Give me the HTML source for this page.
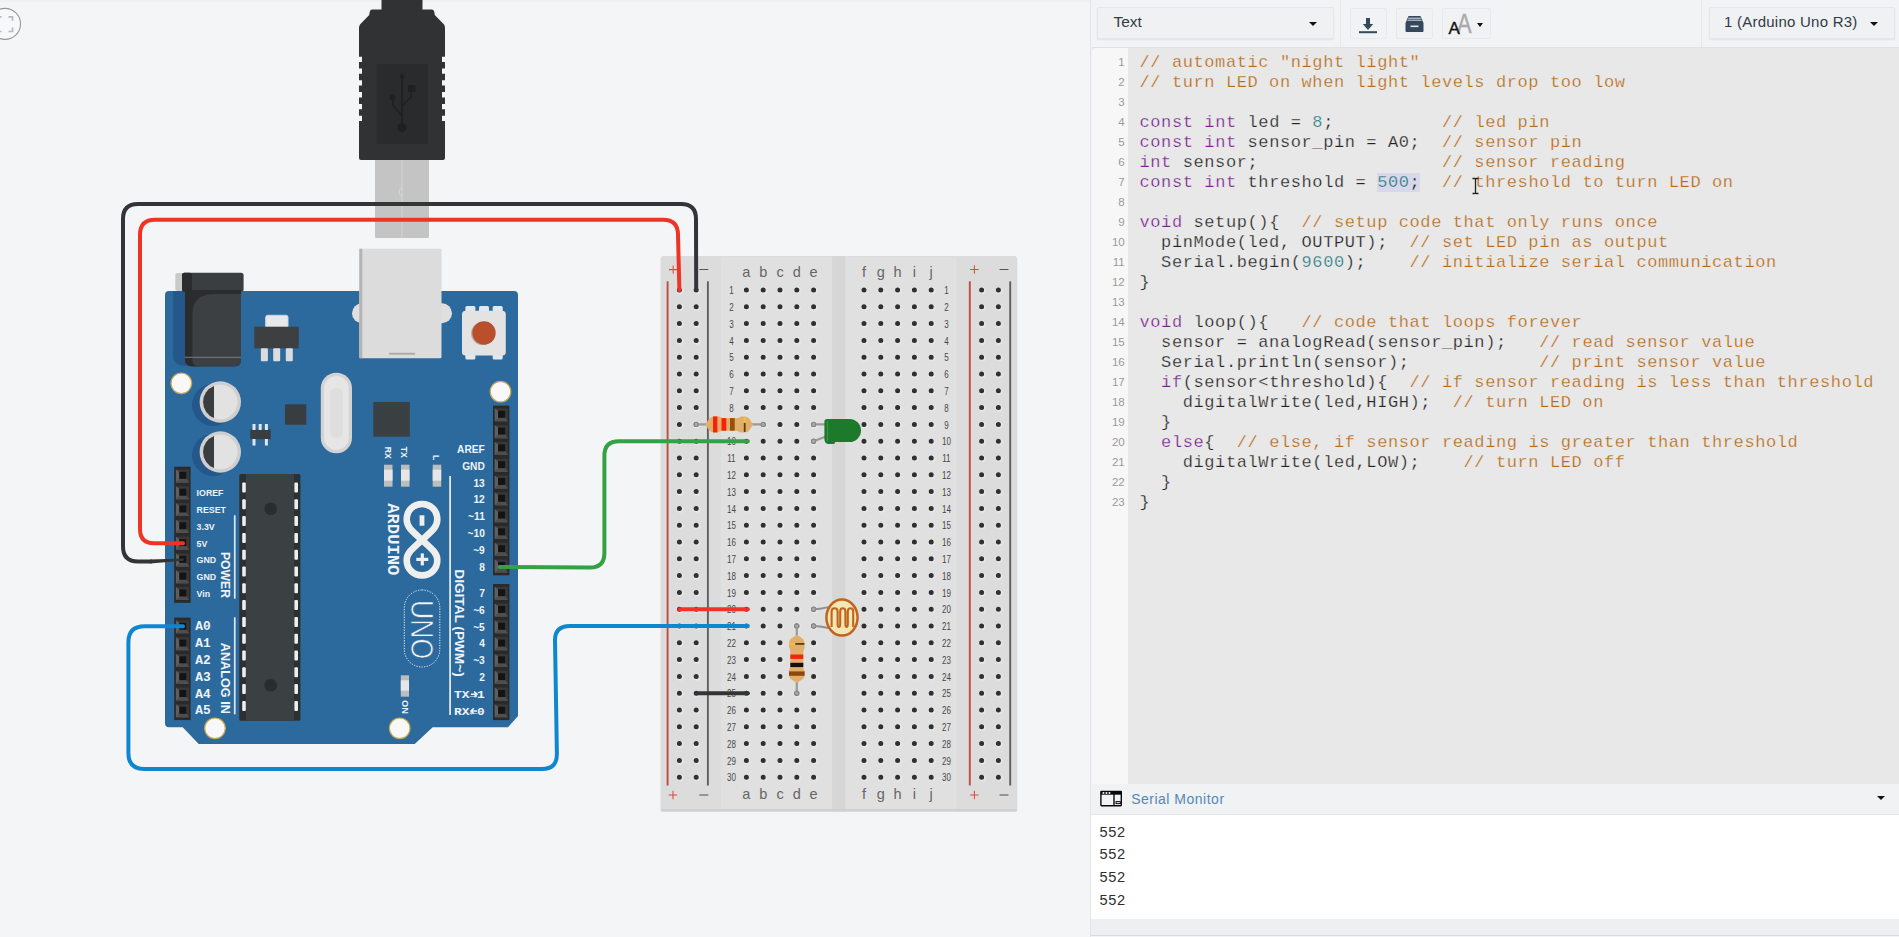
<!DOCTYPE html>
<html lang="en"><head><meta charset="utf-8"><title>Circuit design - Tinkercad</title>
<style>
html,body{margin:0;padding:0}
body{width:1899px;height:937px;overflow:hidden;position:relative;background:#f4f5f7;font-family:"Liberation Sans",sans-serif}
#canvas{position:absolute;left:0;top:0;width:1090px;height:937px;background:#f4f5f7}
#topline{position:absolute;left:0;top:0;width:1090px;height:2px;background:#eef0f2}
#panel{position:absolute;left:1090px;top:0;width:809px;height:937px;background:#f2f3f5;border-left:1px solid #e2e4e7;box-sizing:border-box}
#toolbar{position:absolute;left:0;top:0;right:0;height:47px;background:#f2f3f5}
.dd{position:absolute;top:7px;height:32px;box-sizing:border-box;background:#f0f1f3;border:1px solid #e6e7ea;border-radius:2px;box-shadow:0 1px 2px rgba(0,0,0,.07);font-size:15px;color:#333b45;line-height:30px}
.caret{position:absolute;width:0;height:0;border-left:4px solid transparent;border-right:4px solid transparent;border-top:4.5px solid #111}
.btn{position:absolute;top:8px;height:31px;box-sizing:border-box;background:#f1f2f4;border:1px solid #e8e9ec;border-radius:2px}
.sep{position:absolute;top:0;width:1px;height:47px;background:#e6e8ea}
#editor{position:absolute;left:.5px;top:47px;right:0;height:737px;background:#e8e8e8;border-top:1px solid #e0e1e3;box-sizing:border-box}
#gutter{position:absolute;left:0;top:0;width:36.5px;height:100%;background:#f7f7f7;border-top-left-radius:4px}
#code{position:absolute;left:0;top:5px;right:0}
.ln{position:relative;height:20px}
.ln .no{position:absolute;left:0;width:33.2px;text-align:right;font-size:11.5px;color:#9a9a9a;line-height:18.4px;top:0}
.ln pre{margin:0;position:absolute;left:48px;top:0;font-family:"Liberation Mono",monospace;font-size:17px;letter-spacing:.6px;line-height:20px;color:#222;white-space:pre;-webkit-text-stroke:.25px #e8e8e8}
.k{color:#7a1f93}.n{color:#2b7a80}.c{color:#b96a14}
.sel{background:#d8d8ea;-webkit-text-stroke-color:#d9d9ea}
#serialhead{position:absolute;left:0;top:784px;right:0;height:31px;background:#f1f2f4;border-bottom:1px solid #e4e5e8;box-sizing:border-box}
#serial{position:absolute;left:0;top:815px;right:0;height:104px;background:#fff;font-size:14.6px;color:#2e2e2e;letter-spacing:.6px}
#serial div{position:absolute;left:8.5px;line-height:16px}
#bottombar{position:absolute;left:0;top:919px;right:0;height:16px;background:#eeeff1;border-bottom:1px solid #d9dadd}
</style></head><body>
<div id="canvas"></div><div id="topline"></div>
<svg width="1090" height="937" viewBox="0 0 1090 937" style="position:absolute;left:0;top:0"><rect x="375" y="158" width="54" height="80" rx="1.5" fill="#c4c4c4"/>
<rect x="401.3" y="160" width="1.4" height="78" fill="#d2d2d2"/>
<path d="M402,188 q-3,0 -3,4 q0,4 3,4" fill="none" stroke="#d6d6d6" stroke-width="1"/>
<path d="M381.5,0 L422.5,0 L422.5,9.5 L432,9.5 Q434,9.5 434.3,12 L434.8,15 L444,24.5 Q445,26 445,28 L445,56.7 L445,56.7 L442,56.7 L442,62 L445,62 L445,68.5 L442,68.5 L442,73.8 L445,73.8 L445,80.3 L442,80.3 L442,85.6 L445,85.6 L445,92.1 L442,92.1 L442,97.4 L445,97.4 L445,103.9 L442,103.9 L442,109.2 L445,109.2 L445,115.7 L442,115.7 L442,121 L445,121 L445,158 Q445,160 443,160 L361,160 Q359,160 359,158 L359,121 L362,121 L362,115.7 L359,115.7 L359,109.2 L362,109.2 L362,103.9 L359,103.9 L359,97.4 L362,97.4 L362,92.1 L359,92.1 L359,85.6 L362,85.6 L362,80.3 L359,80.3 L359,73.8 L362,73.8 L362,68.5 L359,68.5 L359,62 L362,62 L362,56.7 L359,56.7 L359,28 Q359,26 360,24.5 L369.2,15 L369.7,12 Q370,9.5 372,9.5 L381.5,9.5 Z" fill="#313233"/>
<rect x="376.5" y="64" width="51.5" height="80" fill="#2a2b2c"/>
<g stroke="#1f2021" stroke-width="1.6" fill="none"><path d="M402,76 V126"/><path d="M402,116 L393,105 V98"/><path d="M402,106 L411,97 V91"/></g>
<circle cx="402" cy="127.5" r="4.6" fill="#1f2021"/><circle cx="392.5" cy="97.5" r="3" fill="#1f2021"/><rect x="408" y="85" width="7.5" height="7" fill="#1f2021"/><path d="M402,73 l-3,5 h6 z" fill="#1f2021"/>
<path d="M169,291 H514 Q518,291 518,295 V716 L508,727.3 H432.7 L414.7,744 H198.7 L182.7,727.3 H169 Q165,727.3 165,723.3 V295 Q165,291 169,291 Z" fill="#2c6a9e"/>
<path d="M173,291 H186 V366 Q179,366 175,362 Q173,360 173,356 Z" fill="#24588a"/>
<rect x="175.3" y="273" width="10" height="18" rx="2" fill="#c9c9c9"/>
<rect x="182" y="272.7" width="61.6" height="19" rx="2.5" fill="#3b3e40"/>
<rect x="182" y="272.7" width="10" height="19" rx="2.5" fill="#2a2c2e"/>
<path d="M185,290 H241 V360 Q241,366.5 234,366.5 H192 Q185,366.5 185,360 Z" fill="#2a2c2e"/>
<path d="M192.4,314 Q192.4,294 215,294 H241 V360 Q241,366 234,366 H199 Q192.4,366 192.4,360 Z" fill="#3c4042"/>
<rect x="185" y="356.8" width="56" height="1" fill="#7a7d7f"/>
<rect x="265.7" y="315.3" width="22.3" height="13" rx="2" fill="#e6e8ea" stroke="#c9d6e6" stroke-width="1"/>
<rect x="254.3" y="326.7" width="44.4" height="21.6" fill="#3d3f40"/>
<rect x="260.9" y="348.3" width="7" height="13" rx="1" fill="#dcdcdc"/>
<rect x="273.2" y="348.3" width="7" height="13" rx="1" fill="#dcdcdc"/>
<rect x="285.8" y="348.3" width="7" height="13" rx="1" fill="#dcdcdc"/>
<rect x="352" y="303.3" width="100" height="20" rx="10" fill="#dfdfdf"/>
<rect x="359.3" y="248.7" width="82.2" height="109.5" rx="1.5" fill="#dcdcdc"/>
<rect x="359.3" y="248.7" width="3" height="109.5" fill="#b4b4b4"/>
<rect x="389" y="352.8" width="26" height="1.8" fill="#a8a8a8"/>
<rect x="465.4" y="306" width="10" height="6" rx="1.5" fill="#e3e8ef"/>
<rect x="479" y="306" width="10" height="6" rx="1.5" fill="#e3e8ef"/>
<rect x="492.7" y="306" width="10" height="6" rx="1.5" fill="#e3e8ef"/>
<rect x="465.4" y="354" width="10" height="5.5" rx="1.5" fill="#e3e8ef"/>
<rect x="492.7" y="354" width="10" height="5.5" rx="1.5" fill="#e3e8ef"/>
<rect x="462" y="310.7" width="43.8" height="44.7" rx="3.5" fill="#e3e3e3"/>
<circle cx="482.5" cy="333.5" r="11.5" fill="#b7b0ab"/>
<circle cx="484" cy="333" r="11.7" fill="#b9502b"/>
<circle cx="181.3" cy="383.3" r="10.3" fill="#f8f8f8" stroke="#c8a94e" stroke-width="1.2"/>
<circle cx="500.5" cy="391.7" r="10.3" fill="#f8f8f8" stroke="#c8a94e" stroke-width="1.2"/>
<circle cx="215" cy="728.3" r="10.3" fill="#f8f8f8" stroke="#c8a94e" stroke-width="1.2"/>
<circle cx="399.7" cy="728.3" r="10.3" fill="#f8f8f8" stroke="#c8a94e" stroke-width="1.2"/>
<circle cx="213" cy="405" r="21" fill="#24588a"/>
<circle cx="220.3" cy="402" r="20.7" fill="#cfcfcf"/>
<circle cx="220.3" cy="402" r="17.3" fill="#e2e2e2"/>
<path d="M214,385.9 A17.3,17.3 0 0 0 214,418.1 Z" fill="#3a3c3e"/>
<circle cx="213" cy="455" r="21" fill="#24588a"/>
<circle cx="220.3" cy="452" r="20.7" fill="#cfcfcf"/>
<circle cx="220.3" cy="452" r="17.3" fill="#e2e2e2"/>
<path d="M214,435.9 A17.3,17.3 0 0 0 214,468.1 Z" fill="#3a3c3e"/>
<rect x="285" y="404.3" width="21.3" height="20.4" fill="#3a3d3f"/>
<rect x="250.3" y="429.6" width="20.4" height="9.6" fill="#3a3d3f"/>
<rect x="252.5" y="424" width="3" height="6" fill="#dfe6ee"/>
<rect x="258.7" y="424" width="3" height="6" fill="#dfe6ee"/>
<rect x="264.9" y="424" width="3" height="6" fill="#dfe6ee"/>
<rect x="252.5" y="439" width="3" height="6.5" fill="#dfe6ee"/>
<rect x="264.9" y="439" width="3" height="6.5" fill="#dfe6ee"/>
<rect x="320.8" y="372.7" width="31.2" height="80.6" rx="15.6" fill="#d4d2d2"/>
<rect x="324" y="376" width="24.8" height="74" rx="12.4" fill="#e6e6e6"/>
<rect x="330" y="388" width="13" height="50" rx="6" fill="#dedede"/>
<rect x="373.3" y="402" width="36.5" height="34.7" fill="#3a3f41"/>
<rect x="384" y="464.7" width="8.5" height="22" fill="#bdbdbd"/>
<rect x="384" y="469.7" width="8.5" height="11" fill="#e6e6e6"/>
<rect x="401" y="464.7" width="8.5" height="22" fill="#bdbdbd"/>
<rect x="401" y="469.7" width="8.5" height="11" fill="#e6e6e6"/>
<rect x="432.7" y="464.7" width="8.5" height="22" fill="#bdbdbd"/>
<rect x="432.7" y="469.7" width="8.5" height="11" fill="#e6e6e6"/>
<rect x="400.8" y="675.3" width="8.2" height="21.4" fill="#bdbdbd"/>
<rect x="400.8" y="680.3" width="8.2" height="10.4" fill="#e6e6e6"/>
<rect x="449.2" y="476" width="1.8" height="239" fill="#dfe8f1"/>
<rect x="233.9" y="515.3" width="1.7" height="83.4" fill="#dfe8f1"/>
<rect x="233.9" y="617.3" width="1.7" height="97" fill="#dfe8f1"/>
<rect x="493" y="405.6" width="16.4" height="169.7" fill="#2a2a2a"/>
<rect x="494.7" y="408.35" width="13" height="13" fill="#383838"/>
<path d="M494.7,408.35 l3.4,2.4 l0,7 l7,0 l2.6,3.6 l-13,0 z" fill="#5e5e5e"/>
<path d="M494.7,421.35 l3.4,-3.6 l7,0 l2.6,3.6 z" fill="#4e4e4e"/>
<rect x="498.1" y="410.75" width="7" height="7" fill="#141414"/>
<rect x="494.7" y="425.15" width="13" height="13" fill="#383838"/>
<path d="M494.7,425.15 l3.4,2.4 l0,7 l7,0 l2.6,3.6 l-13,0 z" fill="#5e5e5e"/>
<path d="M494.7,438.15 l3.4,-3.6 l7,0 l2.6,3.6 z" fill="#4e4e4e"/>
<rect x="498.1" y="427.55" width="7" height="7" fill="#141414"/>
<rect x="494.7" y="441.95" width="13" height="13" fill="#383838"/>
<path d="M494.7,441.95 l3.4,2.4 l0,7 l7,0 l2.6,3.6 l-13,0 z" fill="#5e5e5e"/>
<path d="M494.7,454.95 l3.4,-3.6 l7,0 l2.6,3.6 z" fill="#4e4e4e"/>
<rect x="498.1" y="444.35" width="7" height="7" fill="#141414"/>
<rect x="494.7" y="458.75" width="13" height="13" fill="#383838"/>
<path d="M494.7,458.75 l3.4,2.4 l0,7 l7,0 l2.6,3.6 l-13,0 z" fill="#5e5e5e"/>
<path d="M494.7,471.75 l3.4,-3.6 l7,0 l2.6,3.6 z" fill="#4e4e4e"/>
<rect x="498.1" y="461.15" width="7" height="7" fill="#141414"/>
<rect x="494.7" y="475.55" width="13" height="13" fill="#383838"/>
<path d="M494.7,475.55 l3.4,2.4 l0,7 l7,0 l2.6,3.6 l-13,0 z" fill="#5e5e5e"/>
<path d="M494.7,488.55 l3.4,-3.6 l7,0 l2.6,3.6 z" fill="#4e4e4e"/>
<rect x="498.1" y="477.95" width="7" height="7" fill="#141414"/>
<rect x="494.7" y="492.35" width="13" height="13" fill="#383838"/>
<path d="M494.7,492.35 l3.4,2.4 l0,7 l7,0 l2.6,3.6 l-13,0 z" fill="#5e5e5e"/>
<path d="M494.7,505.35 l3.4,-3.6 l7,0 l2.6,3.6 z" fill="#4e4e4e"/>
<rect x="498.1" y="494.75" width="7" height="7" fill="#141414"/>
<rect x="494.7" y="509.15" width="13" height="13" fill="#383838"/>
<path d="M494.7,509.15 l3.4,2.4 l0,7 l7,0 l2.6,3.6 l-13,0 z" fill="#5e5e5e"/>
<path d="M494.7,522.15 l3.4,-3.6 l7,0 l2.6,3.6 z" fill="#4e4e4e"/>
<rect x="498.1" y="511.55" width="7" height="7" fill="#141414"/>
<rect x="494.7" y="525.95" width="13" height="13" fill="#383838"/>
<path d="M494.7,525.95 l3.4,2.4 l0,7 l7,0 l2.6,3.6 l-13,0 z" fill="#5e5e5e"/>
<path d="M494.7,538.95 l3.4,-3.6 l7,0 l2.6,3.6 z" fill="#4e4e4e"/>
<rect x="498.1" y="528.35" width="7" height="7" fill="#141414"/>
<rect x="494.7" y="542.75" width="13" height="13" fill="#383838"/>
<path d="M494.7,542.75 l3.4,2.4 l0,7 l7,0 l2.6,3.6 l-13,0 z" fill="#5e5e5e"/>
<path d="M494.7,555.75 l3.4,-3.6 l7,0 l2.6,3.6 z" fill="#4e4e4e"/>
<rect x="498.1" y="545.15" width="7" height="7" fill="#141414"/>
<rect x="494.7" y="559.55" width="13" height="13" fill="#383838"/>
<path d="M494.7,559.55 l3.4,2.4 l0,7 l7,0 l2.6,3.6 l-13,0 z" fill="#5e5e5e"/>
<path d="M494.7,572.55 l3.4,-3.6 l7,0 l2.6,3.6 z" fill="#4e4e4e"/>
<rect x="498.1" y="561.95" width="7" height="7" fill="#141414"/>
<rect x="493" y="584" width="16.4" height="136.1" fill="#2a2a2a"/>
<rect x="494.7" y="586.75" width="13" height="13" fill="#383838"/>
<path d="M494.7,586.75 l3.4,2.4 l0,7 l7,0 l2.6,3.6 l-13,0 z" fill="#5e5e5e"/>
<path d="M494.7,599.75 l3.4,-3.6 l7,0 l2.6,3.6 z" fill="#4e4e4e"/>
<rect x="498.1" y="589.15" width="7" height="7" fill="#141414"/>
<rect x="494.7" y="603.55" width="13" height="13" fill="#383838"/>
<path d="M494.7,603.55 l3.4,2.4 l0,7 l7,0 l2.6,3.6 l-13,0 z" fill="#5e5e5e"/>
<path d="M494.7,616.55 l3.4,-3.6 l7,0 l2.6,3.6 z" fill="#4e4e4e"/>
<rect x="498.1" y="605.95" width="7" height="7" fill="#141414"/>
<rect x="494.7" y="620.35" width="13" height="13" fill="#383838"/>
<path d="M494.7,620.35 l3.4,2.4 l0,7 l7,0 l2.6,3.6 l-13,0 z" fill="#5e5e5e"/>
<path d="M494.7,633.35 l3.4,-3.6 l7,0 l2.6,3.6 z" fill="#4e4e4e"/>
<rect x="498.1" y="622.75" width="7" height="7" fill="#141414"/>
<rect x="494.7" y="637.15" width="13" height="13" fill="#383838"/>
<path d="M494.7,637.15 l3.4,2.4 l0,7 l7,0 l2.6,3.6 l-13,0 z" fill="#5e5e5e"/>
<path d="M494.7,650.15 l3.4,-3.6 l7,0 l2.6,3.6 z" fill="#4e4e4e"/>
<rect x="498.1" y="639.55" width="7" height="7" fill="#141414"/>
<rect x="494.7" y="653.95" width="13" height="13" fill="#383838"/>
<path d="M494.7,653.95 l3.4,2.4 l0,7 l7,0 l2.6,3.6 l-13,0 z" fill="#5e5e5e"/>
<path d="M494.7,666.95 l3.4,-3.6 l7,0 l2.6,3.6 z" fill="#4e4e4e"/>
<rect x="498.1" y="656.35" width="7" height="7" fill="#141414"/>
<rect x="494.7" y="670.75" width="13" height="13" fill="#383838"/>
<path d="M494.7,670.75 l3.4,2.4 l0,7 l7,0 l2.6,3.6 l-13,0 z" fill="#5e5e5e"/>
<path d="M494.7,683.75 l3.4,-3.6 l7,0 l2.6,3.6 z" fill="#4e4e4e"/>
<rect x="498.1" y="673.15" width="7" height="7" fill="#141414"/>
<rect x="494.7" y="687.55" width="13" height="13" fill="#383838"/>
<path d="M494.7,687.55 l3.4,2.4 l0,7 l7,0 l2.6,3.6 l-13,0 z" fill="#5e5e5e"/>
<path d="M494.7,700.55 l3.4,-3.6 l7,0 l2.6,3.6 z" fill="#4e4e4e"/>
<rect x="498.1" y="689.95" width="7" height="7" fill="#141414"/>
<rect x="494.7" y="704.35" width="13" height="13" fill="#383838"/>
<path d="M494.7,704.35 l3.4,2.4 l0,7 l7,0 l2.6,3.6 l-13,0 z" fill="#5e5e5e"/>
<path d="M494.7,717.35 l3.4,-3.6 l7,0 l2.6,3.6 z" fill="#4e4e4e"/>
<rect x="498.1" y="706.75" width="7" height="7" fill="#141414"/>
<rect x="174.2" y="466.7" width="16.4" height="136.1" fill="#2a2a2a"/>
<rect x="175.9" y="469.45" width="13" height="13" fill="#383838"/>
<path d="M175.9,469.45 l3.4,2.4 l0,7 l7,0 l2.6,3.6 l-13,0 z" fill="#5e5e5e"/>
<path d="M175.9,482.45 l3.4,-3.6 l7,0 l2.6,3.6 z" fill="#4e4e4e"/>
<rect x="179.3" y="471.85" width="7" height="7" fill="#141414"/>
<rect x="175.9" y="486.25" width="13" height="13" fill="#383838"/>
<path d="M175.9,486.25 l3.4,2.4 l0,7 l7,0 l2.6,3.6 l-13,0 z" fill="#5e5e5e"/>
<path d="M175.9,499.25 l3.4,-3.6 l7,0 l2.6,3.6 z" fill="#4e4e4e"/>
<rect x="179.3" y="488.65" width="7" height="7" fill="#141414"/>
<rect x="175.9" y="503.05" width="13" height="13" fill="#383838"/>
<path d="M175.9,503.05 l3.4,2.4 l0,7 l7,0 l2.6,3.6 l-13,0 z" fill="#5e5e5e"/>
<path d="M175.9,516.05 l3.4,-3.6 l7,0 l2.6,3.6 z" fill="#4e4e4e"/>
<rect x="179.3" y="505.45" width="7" height="7" fill="#141414"/>
<rect x="175.9" y="519.85" width="13" height="13" fill="#383838"/>
<path d="M175.9,519.85 l3.4,2.4 l0,7 l7,0 l2.6,3.6 l-13,0 z" fill="#5e5e5e"/>
<path d="M175.9,532.85 l3.4,-3.6 l7,0 l2.6,3.6 z" fill="#4e4e4e"/>
<rect x="179.3" y="522.25" width="7" height="7" fill="#141414"/>
<rect x="175.9" y="536.65" width="13" height="13" fill="#383838"/>
<path d="M175.9,536.65 l3.4,2.4 l0,7 l7,0 l2.6,3.6 l-13,0 z" fill="#5e5e5e"/>
<path d="M175.9,549.65 l3.4,-3.6 l7,0 l2.6,3.6 z" fill="#4e4e4e"/>
<rect x="179.3" y="539.05" width="7" height="7" fill="#141414"/>
<rect x="175.9" y="553.45" width="13" height="13" fill="#383838"/>
<path d="M175.9,553.45 l3.4,2.4 l0,7 l7,0 l2.6,3.6 l-13,0 z" fill="#5e5e5e"/>
<path d="M175.9,566.45 l3.4,-3.6 l7,0 l2.6,3.6 z" fill="#4e4e4e"/>
<rect x="179.3" y="555.85" width="7" height="7" fill="#141414"/>
<rect x="175.9" y="570.25" width="13" height="13" fill="#383838"/>
<path d="M175.9,570.25 l3.4,2.4 l0,7 l7,0 l2.6,3.6 l-13,0 z" fill="#5e5e5e"/>
<path d="M175.9,583.25 l3.4,-3.6 l7,0 l2.6,3.6 z" fill="#4e4e4e"/>
<rect x="179.3" y="572.65" width="7" height="7" fill="#141414"/>
<rect x="175.9" y="587.05" width="13" height="13" fill="#383838"/>
<path d="M175.9,587.05 l3.4,2.4 l0,7 l7,0 l2.6,3.6 l-13,0 z" fill="#5e5e5e"/>
<path d="M175.9,600.05 l3.4,-3.6 l7,0 l2.6,3.6 z" fill="#4e4e4e"/>
<rect x="179.3" y="589.45" width="7" height="7" fill="#141414"/>
<rect x="174.2" y="617.6" width="16.4" height="102.5" fill="#2a2a2a"/>
<rect x="175.9" y="620.35" width="13" height="13" fill="#383838"/>
<path d="M175.9,620.35 l3.4,2.4 l0,7 l7,0 l2.6,3.6 l-13,0 z" fill="#5e5e5e"/>
<path d="M175.9,633.35 l3.4,-3.6 l7,0 l2.6,3.6 z" fill="#4e4e4e"/>
<rect x="179.3" y="622.75" width="7" height="7" fill="#141414"/>
<rect x="175.9" y="637.15" width="13" height="13" fill="#383838"/>
<path d="M175.9,637.15 l3.4,2.4 l0,7 l7,0 l2.6,3.6 l-13,0 z" fill="#5e5e5e"/>
<path d="M175.9,650.15 l3.4,-3.6 l7,0 l2.6,3.6 z" fill="#4e4e4e"/>
<rect x="179.3" y="639.55" width="7" height="7" fill="#141414"/>
<rect x="175.9" y="653.95" width="13" height="13" fill="#383838"/>
<path d="M175.9,653.95 l3.4,2.4 l0,7 l7,0 l2.6,3.6 l-13,0 z" fill="#5e5e5e"/>
<path d="M175.9,666.95 l3.4,-3.6 l7,0 l2.6,3.6 z" fill="#4e4e4e"/>
<rect x="179.3" y="656.35" width="7" height="7" fill="#141414"/>
<rect x="175.9" y="670.75" width="13" height="13" fill="#383838"/>
<path d="M175.9,670.75 l3.4,2.4 l0,7 l7,0 l2.6,3.6 l-13,0 z" fill="#5e5e5e"/>
<path d="M175.9,683.75 l3.4,-3.6 l7,0 l2.6,3.6 z" fill="#4e4e4e"/>
<rect x="179.3" y="673.15" width="7" height="7" fill="#141414"/>
<rect x="175.9" y="687.55" width="13" height="13" fill="#383838"/>
<path d="M175.9,687.55 l3.4,2.4 l0,7 l7,0 l2.6,3.6 l-13,0 z" fill="#5e5e5e"/>
<path d="M175.9,700.55 l3.4,-3.6 l7,0 l2.6,3.6 z" fill="#4e4e4e"/>
<rect x="179.3" y="689.95" width="7" height="7" fill="#141414"/>
<rect x="175.9" y="704.35" width="13" height="13" fill="#383838"/>
<path d="M175.9,704.35 l3.4,2.4 l0,7 l7,0 l2.6,3.6 l-13,0 z" fill="#5e5e5e"/>
<path d="M175.9,717.35 l3.4,-3.6 l7,0 l2.6,3.6 z" fill="#4e4e4e"/>
<rect x="179.3" y="706.75" width="7" height="7" fill="#141414"/>
<rect x="239.3" y="474" width="61.1" height="246.7" rx="1.5" fill="#2c3032"/>
<rect x="246" y="474" width="48" height="246.7" fill="#3b4143"/>
<rect x="242.2" y="482.5" width="3.6" height="10" rx="1" fill="#eeeeee"/>
<rect x="294.4" y="482.5" width="3.6" height="10" rx="1" fill="#eeeeee"/>
<rect x="242.2" y="499.3" width="3.6" height="10" rx="1" fill="#eeeeee"/>
<rect x="294.4" y="499.3" width="3.6" height="10" rx="1" fill="#eeeeee"/>
<rect x="242.2" y="516.1" width="3.6" height="10" rx="1" fill="#eeeeee"/>
<rect x="294.4" y="516.1" width="3.6" height="10" rx="1" fill="#eeeeee"/>
<rect x="242.2" y="532.9" width="3.6" height="10" rx="1" fill="#eeeeee"/>
<rect x="294.4" y="532.9" width="3.6" height="10" rx="1" fill="#eeeeee"/>
<rect x="242.2" y="549.7" width="3.6" height="10" rx="1" fill="#eeeeee"/>
<rect x="294.4" y="549.7" width="3.6" height="10" rx="1" fill="#eeeeee"/>
<rect x="242.2" y="566.5" width="3.6" height="10" rx="1" fill="#eeeeee"/>
<rect x="294.4" y="566.5" width="3.6" height="10" rx="1" fill="#eeeeee"/>
<rect x="242.2" y="583.3" width="3.6" height="10" rx="1" fill="#eeeeee"/>
<rect x="294.4" y="583.3" width="3.6" height="10" rx="1" fill="#eeeeee"/>
<rect x="242.2" y="600.1" width="3.6" height="10" rx="1" fill="#eeeeee"/>
<rect x="294.4" y="600.1" width="3.6" height="10" rx="1" fill="#eeeeee"/>
<rect x="242.2" y="616.9" width="3.6" height="10" rx="1" fill="#eeeeee"/>
<rect x="294.4" y="616.9" width="3.6" height="10" rx="1" fill="#eeeeee"/>
<rect x="242.2" y="633.7" width="3.6" height="10" rx="1" fill="#eeeeee"/>
<rect x="294.4" y="633.7" width="3.6" height="10" rx="1" fill="#eeeeee"/>
<rect x="242.2" y="650.5" width="3.6" height="10" rx="1" fill="#eeeeee"/>
<rect x="294.4" y="650.5" width="3.6" height="10" rx="1" fill="#eeeeee"/>
<rect x="242.2" y="667.3" width="3.6" height="10" rx="1" fill="#eeeeee"/>
<rect x="294.4" y="667.3" width="3.6" height="10" rx="1" fill="#eeeeee"/>
<rect x="242.2" y="684.1" width="3.6" height="10" rx="1" fill="#eeeeee"/>
<rect x="294.4" y="684.1" width="3.6" height="10" rx="1" fill="#eeeeee"/>
<rect x="242.2" y="700.9" width="3.6" height="10" rx="1" fill="#eeeeee"/>
<rect x="294.4" y="700.9" width="3.6" height="10" rx="1" fill="#eeeeee"/>
<circle cx="270.7" cy="508.7" r="6.3" fill="#2a2d2f"/><circle cx="270.7" cy="685.3" r="6.3" fill="#2a2d2f"/>
<g fill="none" stroke="#efefef" stroke-width="6.6"><path d="M422,540 C 432,531 437.3,527 437.3,519.5 C 437.3,510 430,504 422,504 C 414,504 406.7,510 406.7,519.5 C 406.7,527 412,531 422,540 C 432,549 437.3,553 437.3,560 C 437.3,569.5 430,575.4 422,575.4 C 414,575.4 406.7,569.5 406.7,560 C 406.7,553 412,549 422,540 Z"/></g>
<rect x="419.6" y="515.3" width="4.8" height="10.4" fill="#efefef"/>
<rect x="416.3" y="557.8" width="12" height="3.2" fill="#efefef"/><rect x="420.7" y="553.4" width="3.2" height="12" fill="#efefef"/>
<rect x="404.3" y="590" width="35.5" height="77" rx="17.7" fill="none" stroke="#e4edf5" stroke-width="1" stroke-dasharray="1.3 1.3"/>
<text transform="translate(387.8,503.3) rotate(90)" font-family="'Liberation Mono', sans-serif" font-size="17" font-weight="bold" fill="#eef3f8" textLength="72" lengthAdjust="spacingAndGlyphs">ARDUINO</text>
<text transform="translate(454.8,569.3) rotate(90)" font-family="'Liberation Sans', sans-serif" font-size="13.4" font-weight="bold" fill="#eef3f8" textLength="107.4" lengthAdjust="spacingAndGlyphs">DIGITAL (PWM~)</text>
<text transform="translate(221.4,552) rotate(90)" font-family="'Liberation Sans', sans-serif" font-size="12.6" font-weight="bold" fill="#eef3f8" textLength="46" lengthAdjust="spacingAndGlyphs">POWER</text>
<text transform="translate(221.4,642.7) rotate(90)" font-family="'Liberation Sans', sans-serif" font-size="12.6" font-weight="bold" fill="#eef3f8" textLength="71.3" lengthAdjust="spacingAndGlyphs">ANALOG IN</text>
<text transform="translate(384.6,446.7) rotate(90)" font-family="'Liberation Sans', sans-serif" font-size="8.6" font-weight="bold" fill="#eef3f8" >RX</text>
<text transform="translate(401,446.7) rotate(90)" font-family="'Liberation Sans', sans-serif" font-size="8.6" font-weight="bold" fill="#eef3f8" >TX</text>
<text transform="translate(433.3,455) rotate(90)" font-family="'Liberation Sans', sans-serif" font-size="8.6" font-weight="bold" fill="#eef3f8" >L</text>
<text transform="translate(401.8,700) rotate(90)" font-family="'Liberation Sans', sans-serif" font-size="8.6" font-weight="bold" fill="#eef3f8" textLength="14" lengthAdjust="spacingAndGlyphs">ON</text>
<text transform="translate(410.8,600) rotate(90)" font-family="'Liberation Sans', sans-serif" font-size="31.5" fill="#eef3f8" stroke="#2c6a9e" stroke-width="0.7" textLength="59.3" lengthAdjust="spacingAndGlyphs">UNO</text>
<text x="484.8" y="453" text-anchor="end" font-family="'Liberation Sans', sans-serif" font-size="10.2" font-weight="bold" fill="#eef3f8">AREF</text>
<text x="484.8" y="469.8" text-anchor="end" font-family="'Liberation Sans', sans-serif" font-size="10.2" font-weight="bold" fill="#eef3f8">GND</text>
<text x="484.8" y="486.6" text-anchor="end" font-family="'Liberation Sans', sans-serif" font-size="10.2" font-weight="bold" fill="#eef3f8">13</text>
<text x="484.8" y="503.4" text-anchor="end" font-family="'Liberation Sans', sans-serif" font-size="10.2" font-weight="bold" fill="#eef3f8">12</text>
<text x="484.8" y="520.2" text-anchor="end" font-family="'Liberation Sans', sans-serif" font-size="10.2" font-weight="bold" fill="#eef3f8">~11</text>
<text x="484.8" y="537" text-anchor="end" font-family="'Liberation Sans', sans-serif" font-size="10.2" font-weight="bold" fill="#eef3f8">~10</text>
<text x="484.8" y="553.8" text-anchor="end" font-family="'Liberation Sans', sans-serif" font-size="10.2" font-weight="bold" fill="#eef3f8">~9</text>
<text x="484.8" y="570.6" text-anchor="end" font-family="'Liberation Sans', sans-serif" font-size="10.2" font-weight="bold" fill="#eef3f8">8</text>
<text x="484.8" y="597" text-anchor="end" font-family="'Liberation Sans', sans-serif" font-size="10.2" font-weight="bold" fill="#eef3f8">7</text>
<text x="484.8" y="613.8" text-anchor="end" font-family="'Liberation Sans', sans-serif" font-size="10.2" font-weight="bold" fill="#eef3f8">~6</text>
<text x="484.8" y="630.6" text-anchor="end" font-family="'Liberation Sans', sans-serif" font-size="10.2" font-weight="bold" fill="#eef3f8">~5</text>
<text x="484.8" y="647.4" text-anchor="end" font-family="'Liberation Sans', sans-serif" font-size="10.2" font-weight="bold" fill="#eef3f8">4</text>
<text x="484.8" y="664.2" text-anchor="end" font-family="'Liberation Sans', sans-serif" font-size="10.2" font-weight="bold" fill="#eef3f8">~3</text>
<text x="484.8" y="681" text-anchor="end" font-family="'Liberation Sans', sans-serif" font-size="10.2" font-weight="bold" fill="#eef3f8">2</text>
<text x="484.8" y="697.8" text-anchor="end" font-family="'Liberation Mono', monospace" font-size="11.8" font-weight="bold" fill="#eef3f8" textLength="30.8" lengthAdjust="spacingAndGlyphs">TX→1</text>
<text x="484.8" y="714.6" text-anchor="end" font-family="'Liberation Mono', monospace" font-size="11.8" font-weight="bold" fill="#eef3f8" textLength="30.8" lengthAdjust="spacingAndGlyphs">RX←0</text>
<path d="M471,694.2 h5.6 M474.2,691.6 l2.8,2.6 l-2.8,2.6 M477,711 h-5.6 M473.800,708.4 l-2.8,2.6 l2.8,2.6" stroke="#eef3f8" stroke-width="1.5" fill="none"/>
<text x="196.6" y="496.2" font-family="'Liberation Sans', sans-serif" font-size="8.8" font-weight="bold" fill="#eef3f8">IOREF</text>
<text x="196.6" y="513" font-family="'Liberation Sans', sans-serif" font-size="8.8" font-weight="bold" fill="#eef3f8">RESET</text>
<text x="196.6" y="529.8" font-family="'Liberation Sans', sans-serif" font-size="8.8" font-weight="bold" fill="#eef3f8">3.3V</text>
<text x="196.6" y="546.6" font-family="'Liberation Sans', sans-serif" font-size="8.8" font-weight="bold" fill="#eef3f8">5V</text>
<text x="196.6" y="563.4" font-family="'Liberation Sans', sans-serif" font-size="8.8" font-weight="bold" fill="#eef3f8">GND</text>
<text x="196.6" y="580.2" font-family="'Liberation Sans', sans-serif" font-size="8.8" font-weight="bold" fill="#eef3f8">GND</text>
<text x="196.6" y="597" font-family="'Liberation Sans', sans-serif" font-size="8.8" font-weight="bold" fill="#eef3f8">Vin</text>
<text x="195.3" y="630.3" font-family="'Liberation Mono', monospace" font-size="12.8" font-weight="bold" fill="#eef3f8" textLength="15.4" lengthAdjust="spacingAndGlyphs">A0</text>
<text x="195.3" y="647.1" font-family="'Liberation Mono', monospace" font-size="12.8" font-weight="bold" fill="#eef3f8" textLength="15.4" lengthAdjust="spacingAndGlyphs">A1</text>
<text x="195.3" y="663.9" font-family="'Liberation Mono', monospace" font-size="12.8" font-weight="bold" fill="#eef3f8" textLength="15.4" lengthAdjust="spacingAndGlyphs">A2</text>
<text x="195.3" y="680.7" font-family="'Liberation Mono', monospace" font-size="12.8" font-weight="bold" fill="#eef3f8" textLength="15.4" lengthAdjust="spacingAndGlyphs">A3</text>
<text x="195.3" y="697.5" font-family="'Liberation Mono', monospace" font-size="12.8" font-weight="bold" fill="#eef3f8" textLength="15.4" lengthAdjust="spacingAndGlyphs">A4</text>
<text x="195.3" y="714.3" font-family="'Liberation Mono', monospace" font-size="12.8" font-weight="bold" fill="#eef3f8" textLength="15.4" lengthAdjust="spacingAndGlyphs">A5</text>
<rect x="660.7" y="256" width="356.5" height="555.5" rx="3.5" fill="#dddddd"/>
<rect x="660.7" y="256" width="60" height="555.5" rx="3.5" fill="#dcdcdc"/>
<rect x="957" y="256" width="60.2" height="555.5" rx="3.5" fill="#dcdcdc"/>
<rect x="721" y="257" width="111.3" height="553" fill="#e0e0e0"/>
<rect x="845.3" y="257" width="111" height="553" fill="#e0e0e0"/>
<rect x="832.3" y="256" width="13" height="555.5" fill="#d6d6d6"/>
<rect x="660.7" y="809" width="356.5" height="2.5" rx="1.2" fill="#d0d0d0"/>
<rect x="666.65" y="281.3" width="1.9" height="504.2" fill="#c44a3f"/>
<rect x="968.85" y="281.3" width="1.9" height="504.2" fill="#c44a3f"/>
<rect x="706.95" y="281.3" width="1.9" height="504.2" fill="#606060"/>
<rect x="1009.25" y="281.3" width="1.9" height="504.2" fill="#606060"/>
<path d="M669,269.6 h8.4 M673.2,265.4 v8.4" stroke="#dc4b3c" stroke-width="1.05" fill="none"/>
<path d="M699.3,269.5 h9" stroke="#555" stroke-width="1.05" fill="none"/>
<path d="M970.2,269.5 h8.4 M974.4,265.3 v8.4" stroke="#dc4b3c" stroke-width="1.05" fill="none"/>
<path d="M999.5,269.5 h9" stroke="#555" stroke-width="1.05" fill="none"/>
<path d="M668.8,795 h8.4 M673,790.8 v8.4" stroke="#dc4b3c" stroke-width="1.05" fill="none"/>
<path d="M699.3,795 h9" stroke="#555" stroke-width="1.05" fill="none"/>
<path d="M970.2,795 h8.4 M974.4,790.8 v8.4" stroke="#dc4b3c" stroke-width="1.05" fill="none"/>
<path d="M999.5,795 h9" stroke="#555" stroke-width="1.05" fill="none"/>
<path d="M680.2,290.8 V778.2" stroke="#e6e6e6" stroke-width="7" stroke-linecap="round" stroke-dasharray="0 16.8" fill="none"/>
<path d="M697,290.8 V778.2" stroke="#e6e6e6" stroke-width="7" stroke-linecap="round" stroke-dasharray="0 16.8" fill="none"/>
<path d="M747.2,290.8 V778.2" stroke="#e6e6e6" stroke-width="7" stroke-linecap="round" stroke-dasharray="0 16.8" fill="none"/>
<path d="M764,290.8 V778.2" stroke="#e6e6e6" stroke-width="7" stroke-linecap="round" stroke-dasharray="0 16.8" fill="none"/>
<path d="M780.8,290.8 V778.2" stroke="#e6e6e6" stroke-width="7" stroke-linecap="round" stroke-dasharray="0 16.8" fill="none"/>
<path d="M797.6,290.8 V778.2" stroke="#e6e6e6" stroke-width="7" stroke-linecap="round" stroke-dasharray="0 16.8" fill="none"/>
<path d="M814.4,290.8 V778.2" stroke="#e6e6e6" stroke-width="7" stroke-linecap="round" stroke-dasharray="0 16.8" fill="none"/>
<path d="M864.8,290.8 V778.2" stroke="#e6e6e6" stroke-width="7" stroke-linecap="round" stroke-dasharray="0 16.8" fill="none"/>
<path d="M881.6,290.8 V778.2" stroke="#e6e6e6" stroke-width="7" stroke-linecap="round" stroke-dasharray="0 16.8" fill="none"/>
<path d="M898.4,290.8 V778.2" stroke="#e6e6e6" stroke-width="7" stroke-linecap="round" stroke-dasharray="0 16.8" fill="none"/>
<path d="M915.2,290.8 V778.2" stroke="#e6e6e6" stroke-width="7" stroke-linecap="round" stroke-dasharray="0 16.8" fill="none"/>
<path d="M932,290.8 V778.2" stroke="#e6e6e6" stroke-width="7" stroke-linecap="round" stroke-dasharray="0 16.8" fill="none"/>
<path d="M982.4,290.8 V778.2" stroke="#e6e6e6" stroke-width="7" stroke-linecap="round" stroke-dasharray="0 16.8" fill="none"/>
<path d="M999.2,290.8 V778.2" stroke="#e6e6e6" stroke-width="7" stroke-linecap="round" stroke-dasharray="0 16.8" fill="none"/>
<path d="M679.4,290 V777.4" stroke="#303030" stroke-width="5" stroke-linecap="round" stroke-dasharray="0 16.8" fill="none"/>
<path d="M696.2,290 V777.4" stroke="#303030" stroke-width="5" stroke-linecap="round" stroke-dasharray="0 16.8" fill="none"/>
<path d="M746.4,290 V777.4" stroke="#303030" stroke-width="5" stroke-linecap="round" stroke-dasharray="0 16.8" fill="none"/>
<path d="M763.2,290 V777.4" stroke="#303030" stroke-width="5" stroke-linecap="round" stroke-dasharray="0 16.8" fill="none"/>
<path d="M780,290 V777.4" stroke="#303030" stroke-width="5" stroke-linecap="round" stroke-dasharray="0 16.8" fill="none"/>
<path d="M796.8,290 V777.4" stroke="#303030" stroke-width="5" stroke-linecap="round" stroke-dasharray="0 16.8" fill="none"/>
<path d="M813.6,290 V777.4" stroke="#303030" stroke-width="5" stroke-linecap="round" stroke-dasharray="0 16.8" fill="none"/>
<path d="M864,290 V777.4" stroke="#303030" stroke-width="5" stroke-linecap="round" stroke-dasharray="0 16.8" fill="none"/>
<path d="M880.8,290 V777.4" stroke="#303030" stroke-width="5" stroke-linecap="round" stroke-dasharray="0 16.8" fill="none"/>
<path d="M897.6,290 V777.4" stroke="#303030" stroke-width="5" stroke-linecap="round" stroke-dasharray="0 16.8" fill="none"/>
<path d="M914.4,290 V777.4" stroke="#303030" stroke-width="5" stroke-linecap="round" stroke-dasharray="0 16.8" fill="none"/>
<path d="M931.2,290 V777.4" stroke="#303030" stroke-width="5" stroke-linecap="round" stroke-dasharray="0 16.8" fill="none"/>
<path d="M981.6,290 V777.4" stroke="#303030" stroke-width="5" stroke-linecap="round" stroke-dasharray="0 16.8" fill="none"/>
<path d="M998.4,290 V777.4" stroke="#303030" stroke-width="5" stroke-linecap="round" stroke-dasharray="0 16.8" fill="none"/>
<text x="746.4" y="276.9" text-anchor="middle" font-family="'Liberation Sans', sans-serif" font-size="14.5" fill="#666666">a</text>
<text x="746.4" y="799.4" text-anchor="middle" font-family="'Liberation Sans', sans-serif" font-size="14.5" fill="#666666">a</text>
<text x="763.2" y="276.9" text-anchor="middle" font-family="'Liberation Sans', sans-serif" font-size="14.5" fill="#666666">b</text>
<text x="763.2" y="799.4" text-anchor="middle" font-family="'Liberation Sans', sans-serif" font-size="14.5" fill="#666666">b</text>
<text x="780" y="276.9" text-anchor="middle" font-family="'Liberation Sans', sans-serif" font-size="14.5" fill="#666666">c</text>
<text x="780" y="799.4" text-anchor="middle" font-family="'Liberation Sans', sans-serif" font-size="14.5" fill="#666666">c</text>
<text x="796.8" y="276.9" text-anchor="middle" font-family="'Liberation Sans', sans-serif" font-size="14.5" fill="#666666">d</text>
<text x="796.8" y="799.4" text-anchor="middle" font-family="'Liberation Sans', sans-serif" font-size="14.5" fill="#666666">d</text>
<text x="813.6" y="276.9" text-anchor="middle" font-family="'Liberation Sans', sans-serif" font-size="14.5" fill="#666666">e</text>
<text x="813.6" y="799.4" text-anchor="middle" font-family="'Liberation Sans', sans-serif" font-size="14.5" fill="#666666">e</text>
<text x="864" y="276.9" text-anchor="middle" font-family="'Liberation Sans', sans-serif" font-size="14.5" fill="#666666">f</text>
<text x="864" y="799.4" text-anchor="middle" font-family="'Liberation Sans', sans-serif" font-size="14.5" fill="#666666">f</text>
<text x="880.8" y="276.9" text-anchor="middle" font-family="'Liberation Sans', sans-serif" font-size="14.5" fill="#666666">g</text>
<text x="880.8" y="799.4" text-anchor="middle" font-family="'Liberation Sans', sans-serif" font-size="14.5" fill="#666666">g</text>
<text x="897.6" y="276.9" text-anchor="middle" font-family="'Liberation Sans', sans-serif" font-size="14.5" fill="#666666">h</text>
<text x="897.6" y="799.4" text-anchor="middle" font-family="'Liberation Sans', sans-serif" font-size="14.5" fill="#666666">h</text>
<text x="914.4" y="276.9" text-anchor="middle" font-family="'Liberation Sans', sans-serif" font-size="14.5" fill="#666666">i</text>
<text x="914.4" y="799.4" text-anchor="middle" font-family="'Liberation Sans', sans-serif" font-size="14.5" fill="#666666">i</text>
<text x="931.2" y="276.9" text-anchor="middle" font-family="'Liberation Sans', sans-serif" font-size="14.5" fill="#666666">j</text>
<text x="931.2" y="799.4" text-anchor="middle" font-family="'Liberation Sans', sans-serif" font-size="14.5" fill="#666666">j</text>
<text transform="translate(731.4,294.2) scale(0.78,1)" text-anchor="middle" font-family="'Liberation Sans', sans-serif" font-size="10.3" fill="#484848">1</text>
<text transform="translate(946.4,294.2) scale(0.78,1)" text-anchor="middle" font-family="'Liberation Sans', sans-serif" font-size="10.3" fill="#484848">1</text>
<text transform="translate(731.4,311) scale(0.78,1)" text-anchor="middle" font-family="'Liberation Sans', sans-serif" font-size="10.3" fill="#484848">2</text>
<text transform="translate(946.4,311) scale(0.78,1)" text-anchor="middle" font-family="'Liberation Sans', sans-serif" font-size="10.3" fill="#484848">2</text>
<text transform="translate(731.4,327.8) scale(0.78,1)" text-anchor="middle" font-family="'Liberation Sans', sans-serif" font-size="10.3" fill="#484848">3</text>
<text transform="translate(946.4,327.8) scale(0.78,1)" text-anchor="middle" font-family="'Liberation Sans', sans-serif" font-size="10.3" fill="#484848">3</text>
<text transform="translate(731.4,344.6) scale(0.78,1)" text-anchor="middle" font-family="'Liberation Sans', sans-serif" font-size="10.3" fill="#484848">4</text>
<text transform="translate(946.4,344.6) scale(0.78,1)" text-anchor="middle" font-family="'Liberation Sans', sans-serif" font-size="10.3" fill="#484848">4</text>
<text transform="translate(731.4,361.4) scale(0.78,1)" text-anchor="middle" font-family="'Liberation Sans', sans-serif" font-size="10.3" fill="#484848">5</text>
<text transform="translate(946.4,361.4) scale(0.78,1)" text-anchor="middle" font-family="'Liberation Sans', sans-serif" font-size="10.3" fill="#484848">5</text>
<text transform="translate(731.4,378.2) scale(0.78,1)" text-anchor="middle" font-family="'Liberation Sans', sans-serif" font-size="10.3" fill="#484848">6</text>
<text transform="translate(946.4,378.2) scale(0.78,1)" text-anchor="middle" font-family="'Liberation Sans', sans-serif" font-size="10.3" fill="#484848">6</text>
<text transform="translate(731.4,395) scale(0.78,1)" text-anchor="middle" font-family="'Liberation Sans', sans-serif" font-size="10.3" fill="#484848">7</text>
<text transform="translate(946.4,395) scale(0.78,1)" text-anchor="middle" font-family="'Liberation Sans', sans-serif" font-size="10.3" fill="#484848">7</text>
<text transform="translate(731.4,411.8) scale(0.78,1)" text-anchor="middle" font-family="'Liberation Sans', sans-serif" font-size="10.3" fill="#484848">8</text>
<text transform="translate(946.4,411.8) scale(0.78,1)" text-anchor="middle" font-family="'Liberation Sans', sans-serif" font-size="10.3" fill="#484848">8</text>
<text transform="translate(731.4,428.6) scale(0.78,1)" text-anchor="middle" font-family="'Liberation Sans', sans-serif" font-size="10.3" fill="#484848">9</text>
<text transform="translate(946.4,428.6) scale(0.78,1)" text-anchor="middle" font-family="'Liberation Sans', sans-serif" font-size="10.3" fill="#484848">9</text>
<text transform="translate(731.4,445.4) scale(0.78,1)" text-anchor="middle" font-family="'Liberation Sans', sans-serif" font-size="10.3" fill="#484848">10</text>
<text transform="translate(946.4,445.4) scale(0.78,1)" text-anchor="middle" font-family="'Liberation Sans', sans-serif" font-size="10.3" fill="#484848">10</text>
<text transform="translate(731.4,462.2) scale(0.78,1)" text-anchor="middle" font-family="'Liberation Sans', sans-serif" font-size="10.3" fill="#484848">11</text>
<text transform="translate(946.4,462.2) scale(0.78,1)" text-anchor="middle" font-family="'Liberation Sans', sans-serif" font-size="10.3" fill="#484848">11</text>
<text transform="translate(731.4,479) scale(0.78,1)" text-anchor="middle" font-family="'Liberation Sans', sans-serif" font-size="10.3" fill="#484848">12</text>
<text transform="translate(946.4,479) scale(0.78,1)" text-anchor="middle" font-family="'Liberation Sans', sans-serif" font-size="10.3" fill="#484848">12</text>
<text transform="translate(731.4,495.8) scale(0.78,1)" text-anchor="middle" font-family="'Liberation Sans', sans-serif" font-size="10.3" fill="#484848">13</text>
<text transform="translate(946.4,495.8) scale(0.78,1)" text-anchor="middle" font-family="'Liberation Sans', sans-serif" font-size="10.3" fill="#484848">13</text>
<text transform="translate(731.4,512.6) scale(0.78,1)" text-anchor="middle" font-family="'Liberation Sans', sans-serif" font-size="10.3" fill="#484848">14</text>
<text transform="translate(946.4,512.6) scale(0.78,1)" text-anchor="middle" font-family="'Liberation Sans', sans-serif" font-size="10.3" fill="#484848">14</text>
<text transform="translate(731.4,529.4) scale(0.78,1)" text-anchor="middle" font-family="'Liberation Sans', sans-serif" font-size="10.3" fill="#484848">15</text>
<text transform="translate(946.4,529.4) scale(0.78,1)" text-anchor="middle" font-family="'Liberation Sans', sans-serif" font-size="10.3" fill="#484848">15</text>
<text transform="translate(731.4,546.2) scale(0.78,1)" text-anchor="middle" font-family="'Liberation Sans', sans-serif" font-size="10.3" fill="#484848">16</text>
<text transform="translate(946.4,546.2) scale(0.78,1)" text-anchor="middle" font-family="'Liberation Sans', sans-serif" font-size="10.3" fill="#484848">16</text>
<text transform="translate(731.4,563) scale(0.78,1)" text-anchor="middle" font-family="'Liberation Sans', sans-serif" font-size="10.3" fill="#484848">17</text>
<text transform="translate(946.4,563) scale(0.78,1)" text-anchor="middle" font-family="'Liberation Sans', sans-serif" font-size="10.3" fill="#484848">17</text>
<text transform="translate(731.4,579.8) scale(0.78,1)" text-anchor="middle" font-family="'Liberation Sans', sans-serif" font-size="10.3" fill="#484848">18</text>
<text transform="translate(946.4,579.8) scale(0.78,1)" text-anchor="middle" font-family="'Liberation Sans', sans-serif" font-size="10.3" fill="#484848">18</text>
<text transform="translate(731.4,596.6) scale(0.78,1)" text-anchor="middle" font-family="'Liberation Sans', sans-serif" font-size="10.3" fill="#484848">19</text>
<text transform="translate(946.4,596.6) scale(0.78,1)" text-anchor="middle" font-family="'Liberation Sans', sans-serif" font-size="10.3" fill="#484848">19</text>
<text transform="translate(731.4,613.4) scale(0.78,1)" text-anchor="middle" font-family="'Liberation Sans', sans-serif" font-size="10.3" fill="#484848">20</text>
<text transform="translate(946.4,613.4) scale(0.78,1)" text-anchor="middle" font-family="'Liberation Sans', sans-serif" font-size="10.3" fill="#484848">20</text>
<text transform="translate(731.4,630.2) scale(0.78,1)" text-anchor="middle" font-family="'Liberation Sans', sans-serif" font-size="10.3" fill="#484848">21</text>
<text transform="translate(946.4,630.2) scale(0.78,1)" text-anchor="middle" font-family="'Liberation Sans', sans-serif" font-size="10.3" fill="#484848">21</text>
<text transform="translate(731.4,647) scale(0.78,1)" text-anchor="middle" font-family="'Liberation Sans', sans-serif" font-size="10.3" fill="#484848">22</text>
<text transform="translate(946.4,647) scale(0.78,1)" text-anchor="middle" font-family="'Liberation Sans', sans-serif" font-size="10.3" fill="#484848">22</text>
<text transform="translate(731.4,663.8) scale(0.78,1)" text-anchor="middle" font-family="'Liberation Sans', sans-serif" font-size="10.3" fill="#484848">23</text>
<text transform="translate(946.4,663.8) scale(0.78,1)" text-anchor="middle" font-family="'Liberation Sans', sans-serif" font-size="10.3" fill="#484848">23</text>
<text transform="translate(731.4,680.6) scale(0.78,1)" text-anchor="middle" font-family="'Liberation Sans', sans-serif" font-size="10.3" fill="#484848">24</text>
<text transform="translate(946.4,680.6) scale(0.78,1)" text-anchor="middle" font-family="'Liberation Sans', sans-serif" font-size="10.3" fill="#484848">24</text>
<text transform="translate(731.4,697.4) scale(0.78,1)" text-anchor="middle" font-family="'Liberation Sans', sans-serif" font-size="10.3" fill="#484848">25</text>
<text transform="translate(946.4,697.4) scale(0.78,1)" text-anchor="middle" font-family="'Liberation Sans', sans-serif" font-size="10.3" fill="#484848">25</text>
<text transform="translate(731.4,714.2) scale(0.78,1)" text-anchor="middle" font-family="'Liberation Sans', sans-serif" font-size="10.3" fill="#484848">26</text>
<text transform="translate(946.4,714.2) scale(0.78,1)" text-anchor="middle" font-family="'Liberation Sans', sans-serif" font-size="10.3" fill="#484848">26</text>
<text transform="translate(731.4,731) scale(0.78,1)" text-anchor="middle" font-family="'Liberation Sans', sans-serif" font-size="10.3" fill="#484848">27</text>
<text transform="translate(946.4,731) scale(0.78,1)" text-anchor="middle" font-family="'Liberation Sans', sans-serif" font-size="10.3" fill="#484848">27</text>
<text transform="translate(731.4,747.8) scale(0.78,1)" text-anchor="middle" font-family="'Liberation Sans', sans-serif" font-size="10.3" fill="#484848">28</text>
<text transform="translate(946.4,747.8) scale(0.78,1)" text-anchor="middle" font-family="'Liberation Sans', sans-serif" font-size="10.3" fill="#484848">28</text>
<text transform="translate(731.4,764.6) scale(0.78,1)" text-anchor="middle" font-family="'Liberation Sans', sans-serif" font-size="10.3" fill="#484848">29</text>
<text transform="translate(946.4,764.6) scale(0.78,1)" text-anchor="middle" font-family="'Liberation Sans', sans-serif" font-size="10.3" fill="#484848">29</text>
<text transform="translate(731.4,781.4) scale(0.78,1)" text-anchor="middle" font-family="'Liberation Sans', sans-serif" font-size="10.3" fill="#484848">30</text>
<text transform="translate(946.4,781.4) scale(0.78,1)" text-anchor="middle" font-family="'Liberation Sans', sans-serif" font-size="10.3" fill="#484848">30</text>
<path d="M696.2,424.4 H763.2" stroke="#9a9a9a" stroke-width="2.2" fill="none" stroke-linecap="round"/>
<circle cx="696.2" cy="424.4" r="2.1" fill="#a9a9a9" stroke="#8a8a8a" stroke-width="1.1"/><circle cx="763.2" cy="424.4" r="2.1" fill="#a9a9a9" stroke="#8a8a8a" stroke-width="1.1"/>
<path d="M705.3,424.4 L709,418.9 Q711,416.4 714,416.4 H718 Q720,416.4 722,418.1 H737 Q739,418.1 741,416.4 H745 Q748,416.4 749.5,418.9 L753,424.4 L749.5,429.9 Q748,432.4 745,432.4 H741 Q739,432.4 737,430.7 H722 Q720,430.7 718,432.4 H714 Q711,432.4 709,429.9 Z" fill="#e2ae6b"/>
<rect x="713" y="416.4" width="4.4" height="16" fill="#f5230c"/>
<rect x="721.5" y="418.1" width="4.8" height="12.6" fill="#f5230c"/>
<rect x="730" y="418.1" width="4.7" height="12.6" fill="#96500f"/>
<rect x="743.8" y="416.9" width="1.8" height="6" fill="#f2c530"/><rect x="743.8" y="422.9" width="1.8" height="9" fill="#5a4010"/>
<path d="M813.6,424.4 H826 M813.6,441.2 L826,436.5" stroke="#9a9a9a" stroke-width="2.2" fill="none" stroke-linecap="round"/>
<circle cx="813.6" cy="424.4" r="2.1" fill="#a8a8a8" stroke="#8c8c8c" stroke-width="1.1"/><circle cx="813.6" cy="441.2" r="2.1" fill="#a8a8a8" stroke="#8c8c8c" stroke-width="1.1"/>
<path d="M827,419 H849.5 A11.5,11.5 0 0 1 849.5,442 H835 V442.5 Q835,444 833,444 H829 Q824.4,444 824.4,439 V421.5 Q824.4,419 827,419 Z" fill="#1d7a2d"/>
<path d="M827.6,421 V441" stroke="#3c9a4b" stroke-width="1" fill="none"/>
<path d="M813.6,609.2 C820,609.2 823,608.4 828,607.2 M813.6,626 C820,626 823,626.8 828,628" stroke="#909090" stroke-width="2" fill="none" stroke-linecap="round"/>
<circle cx="813.6" cy="609.2" r="2.1" fill="#a8a8a8" stroke="#8c8c8c" stroke-width="1.1"/><circle cx="813.6" cy="626" r="2.1" fill="#a8a8a8" stroke="#8c8c8c" stroke-width="1.1"/>
<ellipse cx="842" cy="617.6" rx="15.6" ry="18" fill="#f4e7b4" stroke="#c0641f" stroke-width="2.5"/>
<path d="M831.6,627 V611.5 Q831.6,608.3 834.6,608.3 Q837.6,608.3 837.6,611.5 V624 Q837.6,627 838.9,627 Q840.2,627 840.2,624 V611.5 Q840.2,608.3 842.8,608.3 Q845.4,608.3 845.4,611.5 V624 Q845.4,627 846.6,627 Q847.8,627 847.8,624 V611.5 Q847.8,608.3 850.5,608.3 Q853.2,608.3 853.2,611.5 V627" fill="none" stroke="#c0641f" stroke-width="2.1" stroke-linejoin="round"/>
<path d="M796.8,626 V693.2" stroke="#9a9a9a" stroke-width="2.2" fill="none" stroke-linecap="round"/>
<circle cx="796.8" cy="626" r="2.1" fill="#a9a9a9" stroke="#8a8a8a" stroke-width="1.1"/><circle cx="796.8" cy="693.2" r="2.1" fill="#a9a9a9" stroke="#8a8a8a" stroke-width="1.1"/>
<path d="M796.8,634.7 L802.1,638.3 Q804.6,640 804.6,643 V647 Q804.6,649 803.3,651 V667 Q803.3,669 804.6,671 V675 Q804.6,678 802.1,679.5 L796.8,683 L791.5,679.5 Q789,678 789,675 V671 Q789,669 790.3,667 V651 Q790.3,649 789,647 V643 Q789,640 791.5,638.3 Z" fill="#e2ae6b"/>
<rect x="789.3" y="643" width="6" height="1.8" fill="#f2c530"/><rect x="795.3" y="643" width="9" height="1.8" fill="#5a4010"/>
<rect x="790.3" y="654.5" width="13" height="4.4" fill="#f5230c"/>
<rect x="790.3" y="662.8" width="13" height="4.3" fill="#111111"/>
<rect x="789" y="671.4" width="15.6" height="4.4" fill="#8a4a0f"/>
<path d="M150,559.6 L183.5,558.6 Q184.6,559.6 183.5,560.8 L150,563.4 Z" fill="#323437"/>
<path d="M151,561.5 H138 Q123,561.5 123,546.5 V219 Q123,204 138,204 H681 Q696,204 696,219 L696.2,290" stroke="#323437" stroke-width="4" fill="none" stroke-linecap="round" stroke-linejoin="round"/>
<path d="M183,543.3 H154 Q140,543.3 140,529 V234.7 Q140,219.7 155,219.7 H663 Q678,219.7 678,234.7 L679.4,290" stroke="#ee3425" stroke-width="4" fill="none" stroke-linecap="round" stroke-linejoin="round"/>
<path d="M499.5,567 L590,567.6 Q604.4,567.6 604.4,553 V455.5 Q604.4,441.2 619,441.2 H747.9" stroke="#33a144" stroke-width="4" fill="none" stroke-linecap="round" stroke-linejoin="round"/>
<path d="M183,626.3 H144.5 Q128.4,626.3 128.4,642.3 V753 Q128.4,769 144.4,769 H542 Q557,769 556.9,754 L555,640 Q555,626 570,626 H747.9" stroke="#0f87cf" stroke-width="4" fill="none" stroke-linecap="round" stroke-linejoin="round"/>
<path d="M679.4,609.2 H747.9" stroke="#ee3425" stroke-width="4" fill="none" stroke-linecap="round" stroke-linejoin="round"/>
<path d="M696.2,693.2 H747.9" stroke="#323437" stroke-width="4" fill="none" stroke-linecap="round" stroke-linejoin="round"/>
<circle cx="5" cy="23.9" r="15.5" fill="#f7f8f9" stroke="#94979b" stroke-width="1.1"/>
<path d="M8.5,16.8 h4 v4 M12.5,27.5 v4 h-4 M1.5,16.8 h-4 M1.5,31.5 h-4" fill="none" stroke="#b6b9bd" stroke-width="1.7"/></svg>
<div id="panel">
 <div id="toolbar">
  <div class="dd" style="left:6px;width:237px;top:6.500px;height:32.500px"><span style="position:absolute;left:15.500px;top:-.500px;font-size:15.500px">Text</span><span class="caret" style="left:211px;top:14px"></span></div>
  <div class="sep" style="left:249px"></div>
  <div class="btn" style="left:259px;width:37px"><svg width="35" height="29" viewBox="0 0 35 29" style="position:absolute;left:0;top:0"><path d="M15,9 h4 v6 h3.2 l-5.2,6 l-5.200,-6 h3.2 z" fill="#34495e"/><rect x="8" y="22.200" width="18" height="2" fill="#34495e"/></svg></div>
  <div class="btn" style="left:305px;width:37px"><svg width="35" height="29" viewBox="0 0 35 29" style="position:absolute;left:0;top:0"><path d="M11.500,7 h12 l3,7 v8 q0,1 -1,1 h-16 q-1,0 -1,-1 v-8 z" fill="#34495e"/><path d="M11.200,9.200 h12.600 M10.500,11.200 h14" stroke="#f1f2f4" stroke-width=".9"/><rect x="13.500" y="16.500" width="8" height="1.600" fill="#dfe6ee"/></svg></div>
  <div class="btn" style="left:351px;width:49px"><span style="position:absolute;left:13.600px;top:1.700px;font-size:28px;line-height:26px;color:#a9a9a9;transform:scaleX(.78);transform-origin:0 0;-webkit-text-stroke:.5px #a9a9a9">A</span><span style="position:absolute;left:5.500px;top:10.500px;font-size:17px;line-height:18px;color:#111;-webkit-text-stroke:.35px #111">A</span><span class="caret" style="left:34px;top:13.700px;border-left-width:3.900px;border-right-width:3.900px;border-top-width:4px"></span></div>
  <div class="sep" style="left:610px"></div>
  <div class="dd" style="left:618px;width:186px"><span style="position:absolute;left:14px;top:-1px;letter-spacing:.24px;white-space:nowrap">1 (Arduino Uno R3)</span><span class="caret" style="left:160px;top:14px"></span></div>
 </div>
 <div id="editor"><div id="gutter"></div><div id="code"><div class="ln"><span class="no">1</span><pre><span class="c">// automatic "night light"</span></pre></div><div class="ln"><span class="no">2</span><pre><span class="c">// turn LED on when light levels drop too low</span></pre></div><div class="ln"><span class="no">3</span><pre> </pre></div><div class="ln"><span class="no">4</span><pre><span class="k">const</span> <span class="k">int</span> led = <span class="n">8</span>;          <span class="c">// led pin</span></pre></div><div class="ln"><span class="no">5</span><pre><span class="k">const</span> <span class="k">int</span> sensor_pin = A0;  <span class="c">// sensor pin</span></pre></div><div class="ln"><span class="no">6</span><pre><span class="k">int</span> sensor;                 <span class="c">// sensor reading</span></pre></div><div class="ln"><span class="no">7</span><pre><span class="k">const</span> <span class="k">int</span> threshold = <span class="sel"><span class="n">500</span>;</span>  <span class="c">// threshold to turn LED on</span></pre></div><div class="ln"><span class="no">8</span><pre> </pre></div><div class="ln"><span class="no">9</span><pre><span class="k">void</span> setup(){  <span class="c">// setup code that only runs once</span></pre></div><div class="ln"><span class="no">10</span><pre>  pinMode(led, OUTPUT);  <span class="c">// set LED pin as output</span></pre></div><div class="ln"><span class="no">11</span><pre>  Serial.begin(<span class="n">9600</span>);    <span class="c">// initialize serial communication</span></pre></div><div class="ln"><span class="no">12</span><pre>}</pre></div><div class="ln"><span class="no">13</span><pre> </pre></div><div class="ln"><span class="no">14</span><pre><span class="k">void</span> loop(){   <span class="c">// code that loops forever</span></pre></div><div class="ln"><span class="no">15</span><pre>  sensor = analogRead(sensor_pin);   <span class="c">// read sensor value</span></pre></div><div class="ln"><span class="no">16</span><pre>  Serial.println(sensor);            <span class="c">// print sensor value</span></pre></div><div class="ln"><span class="no">17</span><pre>  <span class="k">if</span>(sensor&lt;threshold){  <span class="c">// if sensor reading is less than threshold</span></pre></div><div class="ln"><span class="no">18</span><pre>    digitalWrite(led,HIGH);  <span class="c">// turn LED on</span></pre></div><div class="ln"><span class="no">19</span><pre>  }</pre></div><div class="ln"><span class="no">20</span><pre>  <span class="k">else</span>{  <span class="c">// else, if sensor reading is greater than threshold</span></pre></div><div class="ln"><span class="no">21</span><pre>    digitalWrite(led,LOW);    <span class="c">// turn LED off</span></pre></div><div class="ln"><span class="no">22</span><pre>  }</pre></div><div class="ln"><span class="no">23</span><pre>}</pre></div></div>
  <svg width="9" height="18" viewBox="0 0 9 18" style="position:absolute;left:379.200px;top:129.200px"><path d="M1.500,1.500 h2.200 q.8,0 .8,.8 v13.400 q0,.8 -.8,.8 h-2.200 M7.500,1.500 h-2.200 q-.8,0 -.8,.8 M7.500,16.500 h-2.200 q-.8,0 -.8,-.8" stroke="#222" stroke-width="1.300" fill="none"/></svg>
 </div>
 <div id="serialhead">
  <svg width="24" height="18" viewBox="0 0 24 18" style="position:absolute;left:9px;top:5.900px"><rect x="0.900" y="1.400" width="20.400" height="14.300" rx=".6" fill="#f3f4f6" stroke="#0a0a0a" stroke-width="1.400"/><rect x=".900" y="1.400" width="20.400" height="3.300" fill="#0a0a0a"/><rect x="2.600" y="2.100" width="1.700" height="1.700" fill="#fff"/><rect x="5.600" y="2.100" width="1.700" height="1.700" fill="#fff"/><rect x="8.600" y="2.100" width="1.700" height="1.700" fill="#fff"/><path d="M14,4 v12" stroke="#0a0a0a" stroke-width="1.400"/><rect x="16" y="11.600" width="4.300" height="2" fill="none" stroke="#0a0a0a" stroke-width="1"/></svg>
  <span style="position:absolute;left:40.200px;top:0;line-height:30px;font-size:14px;color:#5189b6;letter-spacing:.5px;white-space:nowrap">Serial Monitor</span>
  <span class="caret" style="left:785.500px;top:12.300px;border-left-width:4.200px;border-right-width:4.200px;border-top-width:4.500px"></span>
 </div>
 <div id="serial"><div style="top:8.500px">552</div><div style="top:30.800px">552</div><div style="top:53.600px">552</div><div style="top:76.600px">552</div></div>
 <div id="bottombar"></div>
</div>
</body></html>
